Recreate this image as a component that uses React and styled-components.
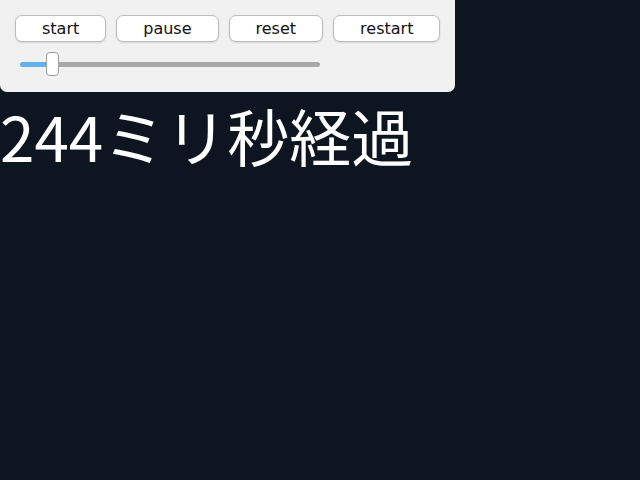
import { useState } from "react";
import styled, { createGlobalStyle } from "styled-components";

const GlobalStyle = createGlobalStyle`
  html, body {
    margin: 0;
    background: #0c1520;
    font-family: "DejaVu Sans", "Noto Sans CJK JP", sans-serif;
  }
`;

export default function App() {
  const [valor, setValor] = useState(9);
  const [ms] = useState(244);

  return (
    <>
      <GlobalStyle />
      <Panel>
        <BotonFila>
          <Boton>start</Boton>
          <Boton>pause</Boton>
          <Boton>reset</Boton>
          <Boton>restart</Boton>
        </BotonFila>
        <Deslizador
          type="range"
          min="0"
          max="100"
          value={valor}
          $pct={valor}
          onChange={(e) => setValor(Number(e.target.value))}
        />
      </Panel>
      <Tiempo>{ms}ミリ秒経過</Tiempo>
    </>
  );
}

const Panel = styled.div`
  display: inline-flex;
  flex-direction: column;
  gap: 10px;
  padding: 15px;
  background: #f1f1f1;
  border-radius: 0 0 7px 7px;
`;

const BotonFila = styled.div`
  display: flex;
  gap: 10px;
`;

const Boton = styled.button`
  height: 27px;
  padding: 0 26px;
  background: #fff;
  border: 1px solid #bdbdbd;
  border-radius: 7px;
  box-shadow: 0 1px 2px rgba(0, 0, 0, 0.12);
  font-family: "DejaVu Sans", sans-serif;
  font-size: 16px;
  color: #111;
  cursor: pointer;
`;

const Deslizador = styled.input`
  -webkit-appearance: none;
  appearance: none;
  width: 300px;
  height: 25px;
  margin: 0 0 0 5px;
  background: transparent;

  &::-webkit-slider-runnable-track {
    height: 5px;
    border-radius: 3px;
    background: linear-gradient(
      to right,
      #62b2f0 0%,
      #62b2f0 ${(p) => p.$pct}%,
      #a9a9a9 ${(p) => p.$pct}%,
      #a9a9a9 100%
    );
  }

  &::-webkit-slider-thumb {
    -webkit-appearance: none;
    width: 13px;
    height: 24px;
    margin-top: -10px;
    background: #fff;
    border: 1px solid #9e9e9e;
    border-radius: 4px;
  }
`;

const Tiempo = styled.h1`
  margin: 0;
  color: #fff;
  font-family: "Noto Sans CJK JP", sans-serif;
  font-weight: 400;
  font-size: 62px;
  line-height: 1.4;
`;
